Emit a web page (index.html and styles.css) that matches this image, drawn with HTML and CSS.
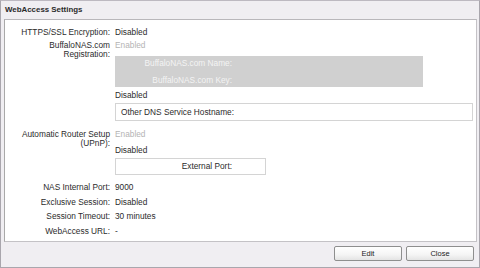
FILE: index.html
```html
<!DOCTYPE html>
<html>
<head>
<meta charset="utf-8">
<link rel="stylesheet" href="styles.css">
</head>
<body>
<div class="window">
  <div class="titlebar">WebAccess Settings</div>
  <div class="panel">
    <div class="row r1">
      <div class="label">HTTPS/SSL Encryption:</div>
      <div class="value">Disabled</div>
    </div>
    <div class="row r2">
      <div class="label two">BuffaloNAS.com<br>Registration:</div>
      <div class="value col">
        <div class="line dim">Enabled</div>
        <div class="graybox">
          <div class="gline g1">BuffaloNAS.com Name:</div>
          <div class="gline g2">BuffaloNAS.com Key:</div>
        </div>
        <div class="line after-gray">Disabled</div>
        <div class="field wide">Other DNS Service Hostname:</div>
      </div>
    </div>
    <div class="row r3">
      <div class="label two">Automatic Router Setup<br>(UPnP):</div>
      <div class="value col">
        <div class="line dim">Enabled</div>
        <div class="line dis2">Disabled</div>
        <div class="field narrow">External Port:</div>
      </div>
    </div>
    <div class="row r4">
      <div class="label">NAS Internal Port:</div>
      <div class="value">9000</div>
    </div>
    <div class="row r5">
      <div class="label">Exclusive Session:</div>
      <div class="value">Disabled</div>
    </div>
    <div class="row r5">
      <div class="label">Session Timeout:</div>
      <div class="value">30 minutes</div>
    </div>
    <div class="row r5">
      <div class="label">WebAccess URL:</div>
      <div class="value">-</div>
    </div>
  </div>
  <div class="buttons">
    <button class="btn">Edit</button>
    <button class="btn">Close</button>
  </div>
</div>
</body>
</html>
```
FILE: styles.css
```css
html, body {
  margin: 0;
  padding: 0;
  background: #ffffff;
}
body {
  font-family: "Liberation Sans", Arial, sans-serif;
  font-size: 8.3px;
  color: #2b2b2b;
}
.window {
  width: 480px;
  height: 268px;
  box-sizing: border-box;
  border: 1px solid #a9a6ad;
  border-top-color: #bdb9c1;
  background: #f0eef2;
  display: flex;
  flex-direction: column;
}
.titlebar {
  height: 18px;
  line-height: 18px;
  padding-left: 4px;
  font-weight: bold;
  font-size: 7.9px;
  color: #2a2a2a;
  box-sizing: border-box;
}
.panel {
  margin: 0 2px 0 3px;
  height: 223px;
  box-sizing: border-box;
  background: #ffffff;
  border: 1px solid #c4c2c6;
  border-left-color: #a9a9a9;
  border-top-color: #b9b7bb;
  padding-top: 7px;
}
.row {
  display: grid;
  grid-template-columns: 105px 1fr;
  column-gap: 5px;
  line-height: 10px;
}
.label {
  text-align: right;
  white-space: nowrap;
}
.label.two {
  line-height: 8.5px;
  padding-top: 1px;
}
.value { white-space: nowrap; }
.col {
  display: flex;
  flex-direction: column;
  align-items: flex-start;
}
.line { height: 10px; line-height: 10px; }
.dim { color: #b4b4b4; }
.r2 { margin-top: 3px; }
.graybox {
  margin-top: 6px;
  width: 308px;
  height: 31px;
  background: #d0d0d0;
}
.gline {
  width: 117px;
  text-align: right;
  color: #f4f4f4;
  height: 10px;
  line-height: 10px;
}
.g1 { margin-top: 2px; }
.g2 { margin-top: 7px; }
.after-gray { margin-top: 3px; }
.field {
  margin-top: 3px;
  box-sizing: border-box;
  border: 1px solid #d4d4d4;
  background: #fff;
  height: 18px;
  line-height: 16px;
}
.field.wide {
  width: 358px;
  padding-left: 5px;
}
.field.narrow {
  width: 151px;
  height: 17px;
  line-height: 15px;
  margin-top: 3px;
  text-align: right;
  padding-right: 33px;
}
.r3 { margin-top: 8px; }
.dis2 { margin-top: 6px; }
.r4 { margin-top: 7px; }
.r5 { margin-top: 4.5px; }
.buttons {
  display: flex;
  justify-content: flex-end;
  gap: 4px;
  padding: 4px 5px 0 0;
}
.btn {
  width: 68px;
  height: 15px;
  margin: 0;
  padding: 0;
  box-sizing: border-box;
  border: 1px solid #8e8e8e;
  border-radius: 2px;
  background: linear-gradient(#ffffff, #f4f4f4 60%, #e4e4e4);
  font-family: "Liberation Sans", Arial, sans-serif;
  font-size: 7.5px;
  color: #222;
  line-height: 13px;
}
```
